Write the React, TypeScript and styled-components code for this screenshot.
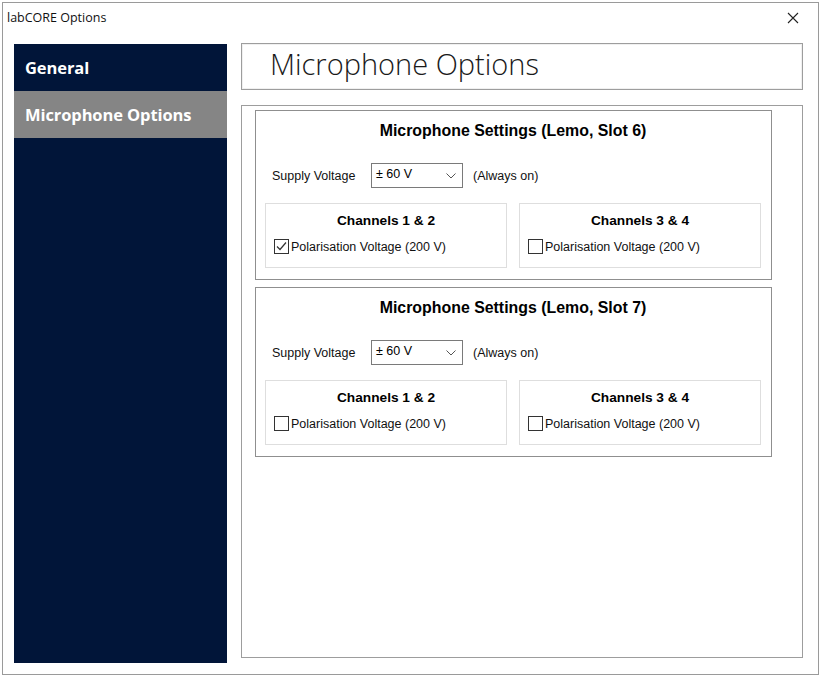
import React from "react";
import styled, { createGlobalStyle } from "styled-components";

const GlobalStyle = createGlobalStyle`
  html, body {
    margin: 0;
    padding: 0;
    background: #ffffff;
  }
  body {
    font-family: "Liberation Sans", Arial, sans-serif;
  }
`;

type Channel = { title: string; checked: boolean };
type Group = { slot: number; voltage: string; channels: Channel[] };

const groups: Group[] = [
  {
    slot: 6,
    voltage: "± 60 V",
    channels: [
      { title: "Channels 1 & 2", checked: true },
      { title: "Channels 3 & 4", checked: false },
    ],
  },
  {
    slot: 7,
    voltage: "± 60 V",
    channels: [
      { title: "Channels 1 & 2", checked: false },
      { title: "Channels 3 & 4", checked: false },
    ],
  },
];

const navItems = ["General", "Microphone Options"];

export default function App() {
  return (
    <>
      <GlobalStyle />
      <Window>
        <TitleBar>
          <TitleText>labCORE Options</TitleText>
          <CloseButton>
            <svg width="12" height="12" viewBox="0 0 12 12">
              <path d="M1 1 L11 11 M11 1 L1 11" stroke="#222" strokeWidth="1.1" />
            </svg>
          </CloseButton>
        </TitleBar>
        <Body>
          <Sidebar>
            {navItems.map((item) => (
              <NavItem key={item} $active={item === "Microphone Options"}>
                {item}
              </NavItem>
            ))}
          </Sidebar>
          <Content>
            <Header>Microphone Options</Header>
            <Panel>
              {groups.map((g) => (
                <GroupBox key={g.slot}>
                  <GroupTitle>Microphone Settings (Lemo, Slot {g.slot})</GroupTitle>
                  <SupplyRow>
                    <SupplyLabel>Supply Voltage</SupplyLabel>
                    <Select>
                      <span>{g.voltage}</span>
                      <svg width="10" height="6" viewBox="0 0 10 6">
                        <path d="M0.5 0.5 L5 5 L9.5 0.5" fill="none" stroke="#555" strokeWidth="1" />
                      </svg>
                    </Select>
                    <Note>(Always on)</Note>
                  </SupplyRow>
                  <ChannelRow>
                    {g.channels.map((c) => (
                      <ChannelBox key={c.title}>
                        <ChannelTitle>{c.title}</ChannelTitle>
                        <CheckRow>
                          <CheckBox>
                            {c.checked && (
                              <svg width="13" height="13" viewBox="0 0 13 13">
                                <path d="M2 6.5 L5 9.5 L11 2.5" fill="none" stroke="#333" strokeWidth="1.2" />
                              </svg>
                            )}
                          </CheckBox>
                          <CheckLabel>Polarisation Voltage (200 V)</CheckLabel>
                        </CheckRow>
                      </ChannelBox>
                    ))}
                  </ChannelRow>
                </GroupBox>
              ))}
            </Panel>
          </Content>
        </Body>
      </Window>
    </>
  );
}

const Window = styled.div`
  margin: 2px 0 0 2px;
  width: 815px;
  height: 671px;
  border: 1px solid #9a9a9a;
  background: #ffffff;
  display: flex;
  flex-direction: column;
`;

const TitleBar = styled.div`
  height: 32px;
  display: flex;
  align-items: center;
  justify-content: space-between;
  padding: 0 0 0 4px;
`;

const TitleText = styled.span`
  font-family: "Open Sans", "Noto Sans", sans-serif;
  font-size: 12.5px;
  color: #111;
  margin-top: -3px;
`;

const CloseButton = styled.div`
  width: 46px;
  height: 32px;
  display: flex;
  align-items: center;
  justify-content: center;
  margin-right: 2px;
  margin-top: -3px;
`;

const Body = styled.div`
  flex: 1;
  display: flex;
  padding: 9px 0 10px 11px;
  box-sizing: border-box;
`;

const Sidebar = styled.div`
  width: 213px;
  height: 619px;
  background: #011539;
  display: flex;
  flex-direction: column;
`;

const NavItem = styled.div<{ $active?: boolean }>`
  height: 47px;
  display: flex;
  align-items: center;
  padding-left: 11px;
  font-family: "Open Sans", "Noto Sans", sans-serif;
  font-weight: 700;
  font-size: 16.5px;
  letter-spacing: -0.1px;
  color: #ffffff;
  background: ${(p) => (p.$active ? "#858585" : "transparent")};
`;

const Content = styled.div`
  margin-left: 14px;
  margin-top: -1px;
  width: 562px;
  display: flex;
  flex-direction: column;
`;

const Header = styled.div`
  border: 1px solid #9d9d9d;
  box-shadow: inset 0 0 0 1px #f0f0f0;
  display: flex;
  align-items: center;
  padding-left: 28px;
  padding-bottom: 6px;
  height: 39px;
  font-family: "Open Sans", "Noto Sans", sans-serif;
  font-weight: 300;
  font-size: 29px;
  color: #1a1a1a;
`;

const Panel = styled.div`
  margin-top: 15px;
  height: 547px;
  border: 1px solid #9d9d9d;
  padding: 4px 0 0 13px;
  display: flex;
  flex-direction: column;
  gap: 7px;
`;

const GroupBox = styled.div`
  width: 517px;
  height: 170px;
  border: 1px solid #8f8f8f;
  display: flex;
  flex-direction: column;
  padding: 0 10px 0 9px;
  box-sizing: border-box;
`;

const GroupTitle = styled.div`
  margin-top: 11px;
  text-align: center;
  font-weight: 700;
  font-size: 15.9px;
  color: #000;
  height: 18px;
  line-height: 18px;
`;

const SupplyRow = styled.div`
  margin-top: 23px;
  display: flex;
  align-items: center;
  height: 25px;
  padding-left: 7px;
`;

const SupplyLabel = styled.span`
  font-size: 12.5px;
  color: #111;
  width: 99px;
`;

const Select = styled.div`
  width: 80px;
  height: 23px;
  border: 1px solid #7a7a7a;
  display: flex;
  align-items: center;
  justify-content: space-between;
  padding: 0 6px 0 4px;
  font-size: 12.5px;
  color: #000;
  span {
    margin-top: -4px;
  }
`;

const Note = styled.span`
  margin-left: 10px;
  font-size: 12.5px;
  color: #111;
`;

const ChannelRow = styled.div`
  margin-top: 15px;
  display: flex;
  gap: 12px;
`;

const ChannelBox = styled.div`
  width: 242px;
  height: 65px;
  box-sizing: border-box;
  border: 1px solid #dedede;
  display: flex;
  flex-direction: column;
`;

const ChannelTitle = styled.div`
  margin-top: 8px;
  text-align: center;
  font-weight: 700;
  font-size: 13.7px;
  height: 18px;
  line-height: 18px;
  color: #000;
`;

const CheckRow = styled.div`
  margin-top: 9px;
  display: flex;
  align-items: center;
  padding-left: 8px;
`;

const CheckBox = styled.div`
  width: 13px;
  height: 13px;
  border: 1px solid #333;
  background: #fff;
  display: flex;
  align-items: center;
  justify-content: center;
`;

const CheckLabel = styled.span`
  margin-left: 2px;
  font-size: 12.5px;
  color: #111;
`;
